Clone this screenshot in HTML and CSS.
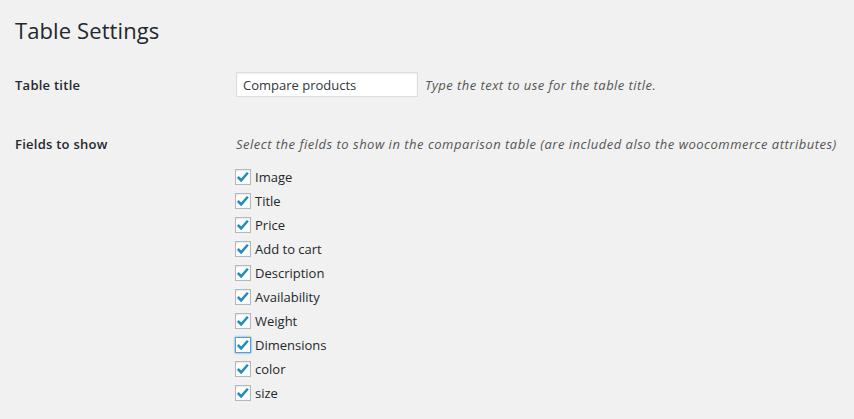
FILE: index.html
```html
<!DOCTYPE html>
<html>
<head>
<meta charset="utf-8">
<link rel="stylesheet" href="styles.css">
</head>
<body>
<div class="wrap">
  <h2 class="title">Table Settings</h2>
  <div class="row row-title">
    <div class="label">Table title</div>
    <div class="field inline">
      <input class="text-input" type="text" value="Compare products">
      <span class="desc">Type the text to use for the table title.</span>
    </div>
  </div>
  <div class="row row-fields">
    <div class="label">Fields to show</div>
    <div class="field">
      <p class="desc desc-block">Select the fields to show in the comparison table (are included also the woocommerce attributes)</p>
      <ul class="checks">
        <li><span class="cb"><svg viewBox="0 0 16 16"><path d="M2.8 8 L6.2 11.4 L12.8 3.8"/></svg></span>Image</li>
        <li><span class="cb"><svg viewBox="0 0 16 16"><path d="M2.8 8 L6.2 11.4 L12.8 3.8"/></svg></span>Title</li>
        <li><span class="cb"><svg viewBox="0 0 16 16"><path d="M2.8 8 L6.2 11.4 L12.8 3.8"/></svg></span>Price</li>
        <li><span class="cb"><svg viewBox="0 0 16 16"><path d="M2.8 8 L6.2 11.4 L12.8 3.8"/></svg></span>Add to cart</li>
        <li><span class="cb"><svg viewBox="0 0 16 16"><path d="M2.8 8 L6.2 11.4 L12.8 3.8"/></svg></span>Description</li>
        <li><span class="cb"><svg viewBox="0 0 16 16"><path d="M2.8 8 L6.2 11.4 L12.8 3.8"/></svg></span>Availability</li>
        <li><span class="cb"><svg viewBox="0 0 16 16"><path d="M2.8 8 L6.2 11.4 L12.8 3.8"/></svg></span>Weight</li>
        <li><span class="cb cb-focus"><svg viewBox="0 0 16 16"><path d="M2.8 8 L6.2 11.4 L12.8 3.8"/></svg></span>Dimensions</li>
        <li><span class="cb"><svg viewBox="0 0 16 16"><path d="M2.8 8 L6.2 11.4 L12.8 3.8"/></svg></span>color</li>
        <li><span class="cb"><svg viewBox="0 0 16 16"><path d="M2.8 8 L6.2 11.4 L12.8 3.8"/></svg></span>size</li>
      </ul>
    </div>
  </div>
</div>
</body>
</html>
```
FILE: styles.css
```css
html, body {
  margin: 0;
  padding: 0;
  background: #f1f1f1;
}
body {
  font-family: "Open Sans", "Noto Sans", sans-serif;
  font-size: 13px;
  color: #23282d;
}
.wrap {
  padding: 0 15px;
}
.title {
  margin: 0;
  padding-top: 15px;
  font-size: 22px;
  font-weight: 400;
  line-height: 30px;
  color: #23282d;
  letter-spacing: 0.1px;
}
.row {
  display: flex;
}
.label {
  width: 221px;
  flex: none;
  font-weight: 600;
  font-size: 13px;
  line-height: 20px;
  letter-spacing: 0.25px;
}
.row-title {
  margin-top: 27px;
  align-items: center;
}
.row-fields {
  margin-top: 37px;
}
.field.inline {
  display: flex;
  align-items: center;
  gap: 7px;
}
.text-input {
  box-sizing: border-box;
  width: 182px;
  height: 25px;
  margin: 0;
  padding: 2px 6px;
  border: 1px solid #ddd;
  box-shadow: inset 0 1px 2px rgba(0,0,0,0.07);
  background: #fff;
  font-family: inherit;
  font-size: 13px;
  color: #32373c;
  outline: none;
}
.desc {
  font-style: italic;
  color: #555;
  font-size: 13px;
  letter-spacing: 0.45px;
}
.desc-block {
  margin: 0;
  line-height: 20px;
  letter-spacing: 0.5px;
}
.checks {
  list-style: none;
  margin: 11px 0 0 -1px;
  padding: 0;
}
.checks li {
  display: flex;
  align-items: center;
  height: 24px;
  line-height: 20px;
  font-size: 13px;
}
.cb {
  box-sizing: border-box;
  width: 16px;
  height: 16px;
  margin-right: 4px;
  border: 1px solid #b4b9be;
  background: #fff;
  box-shadow: inset 0 1px 2px rgba(0,0,0,0.1);
  display: flex;
  align-items: center;
  justify-content: center;
  flex: none;
}
.cb svg {
  width: 16px;
  height: 16px;
  flex: none;
}
.cb path {
  fill: none;
  stroke: #1e8cbe;
  stroke-width: 2.5;
  stroke-linecap: butt;
  stroke-linejoin: miter;
}
.cb-focus {
  border-color: #5b9dd9;
  box-shadow: 0 0 2px rgba(30,140,190,0.8);
}
```
